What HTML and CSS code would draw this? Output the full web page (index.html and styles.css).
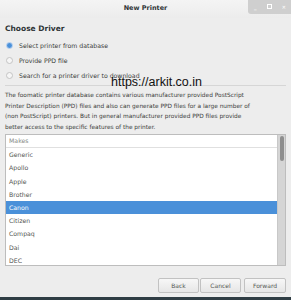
FILE: index.html
```html
<!DOCTYPE html>
<html lang="en">
<head>
    <meta charset="UTF-8">
    <title>New Printer</title>
    <link rel="stylesheet" href="styles.css">
</head>
<body>
    <div class="window">
        <!-- Title bar -->
        <div class="titlebar">
            <span class="title">New Printer</span>
            <div class="controls">
                <span class="ctl">_</span>
                <span class="ctl"><span class="box"></span></span>
                <span class="ctl">&#x2715;</span>
            </div>
        </div>

        <div class="content">
            <h2>Choose Driver</h2>
            <div class="options">
                <div class="option"><span class="radio checked"></span>Select printer from database</div>
                <div class="option"><span class="radio"></span>Provide PPD file</div>
                <div class="option"><span class="radio"></span>Search for a printer driver to download</div>
            </div>
            <div class="watermark">https://arkit.co.in</div>
            <div class="sep"></div>
            <p class="info">The foomatic printer database contains various manufacturer provided PostScript<br>Printer Description (PPD) files and also can generate PPD files for a large number of<br>(non PostScript) printers. But in general manufacturer provided PPD files provide<br>better access to the specific features of the printer.</p>

            <div class="listbox">
                <div class="rows">
                    <div class="row head">Makes</div>
                    <div class="row">Generic</div>
                    <div class="row">Apollo</div>
                    <div class="row">Apple</div>
                    <div class="row">Brother</div>
                    <div class="row selected">Canon</div>
                    <div class="row">Citizen</div>
                    <div class="row">Compaq</div>
                    <div class="row">Dai</div>
                    <div class="row">DEC</div>
                </div>
                <div class="scrollbar"><div class="thumb"></div></div>
            </div>

            <div class="buttons">
                <button>Back</button>
                <button>Cancel</button>
                <button class="fwd">Forward</button>
            </div>
        </div>
        <div class="bottom"></div>
    </div>
</body>
</html>
```

FILE: styles.css
```css
body {
    margin: 0;
    font-family: 'DejaVu Sans', sans-serif;
    background: #ededed;
}
.window {
    width: 291px;
    height: 300px;
    display: flex;
    flex-direction: column;
    background: #ededed;
    position: relative;
}
.titlebar {
    height: 18px;
    display: flex;
    align-items: center;
    justify-content: center;
    background: linear-gradient(#f4f4f4, #ececec);
    position: relative;
}
.title {
    font-size: 6.5px;
    font-weight: bold;
    color: #2e3436;
    margin-top: -3px;
}
.controls {
    position: absolute;
    top: 0;
    right: 0;
    width: 43px;
    height: 14px;
    background: #cfcfcf;
    border-bottom-left-radius: 3px;
    display: flex;
    justify-content: space-around;
    align-items: center;
}
.ctl {
    color: #fff;
    font-size: 5px;
    font-weight: bold;
    width: 8px;
    text-align: center;
}
.ctl .box {
    display: inline-block;
    width: 3px;
    height: 3px;
    border: 1px solid #fff;
}
.content {
    flex: 1;
    padding: 0 5px;
    display: flex;
    flex-direction: column;
    position: relative;
}
h2 {
    font-size: 7.5px;
    font-weight: bold;
    color: #2e3436;
    margin: 6px 0 7px 0;
}
.options {
    display: flex;
    flex-direction: column;
    gap: 5px;
}
.option {
    display: flex;
    align-items: center;
    font-size: 6.2px;
    color: #3a3c3a;
    height: 10px;
}
.radio {
    width: 5px;
    height: 5px;
    border-radius: 50%;
    border: 1px solid #c4c4c4;
    background: #f6f6f6;
    margin: 0 6px 0 1px;
}
.radio.checked {
    background: radial-gradient(circle, #4a90d9 50%, #8ab8e8 100%);
    border-color: #a8c8ee;
}
/* watermark stamped over the dialog */
.watermark {
    position: absolute;
    left: 111px;
    top: 57px;
    font-family: 'Liberation Sans', sans-serif;
    font-size: 12.5px;
    color: #111;
}
.sep {
    height: 1px;
    background: #d6d6d6;
    margin: 5px 0 4px 0;
}
.info {
    font-size: 5.85px;
    line-height: 10.5px;
    color: #3a3c3a;
    margin: 0 0 2px 0;
    white-space: nowrap;
}
.listbox {
    height: 130px;
    border: 1px solid #bdbdbd;
    background: #fff;
    display: flex;
}
.rows {
    flex: 1;
}
.row {
    height: 13.2px;
    line-height: 13.2px;
    font-size: 6.2px;
    color: #555753;
    padding-left: 3px;
}
.row.head {
    color: #888a85;
    border-bottom: 1px solid #e0e0e0;
    height: 12.2px;
    line-height: 12.2px;
}
.row.selected {
    background: #4a90d9;
    color: #fff;
}
.scrollbar {
    width: 7px;
    background: #d5d5d5;
    border-left: 1px solid #c8c8c8;
}
.thumb {
    width: 4px;
    height: 25px;
    margin: 1px auto;
    background: #8e8e8e;
    border-radius: 2px;
}
.buttons {
    display: flex;
    justify-content: flex-end;
    gap: 1px;
    margin-top: 12px;
}
button {
    font-family: 'DejaVu Sans', sans-serif;
    font-size: 6px;
    color: #555753;
    width: 41px;
    height: 15px;
    border: 1px solid #c2c2c2;
    border-radius: 2px;
    background: linear-gradient(#f7f7f7, #e6e6e6);
    padding: 0;
}
button.fwd {
    margin-left: 2px;
    width: 42px;
}
.bottom {
    height: 3px;
    background: #2f3d44;
}
```
